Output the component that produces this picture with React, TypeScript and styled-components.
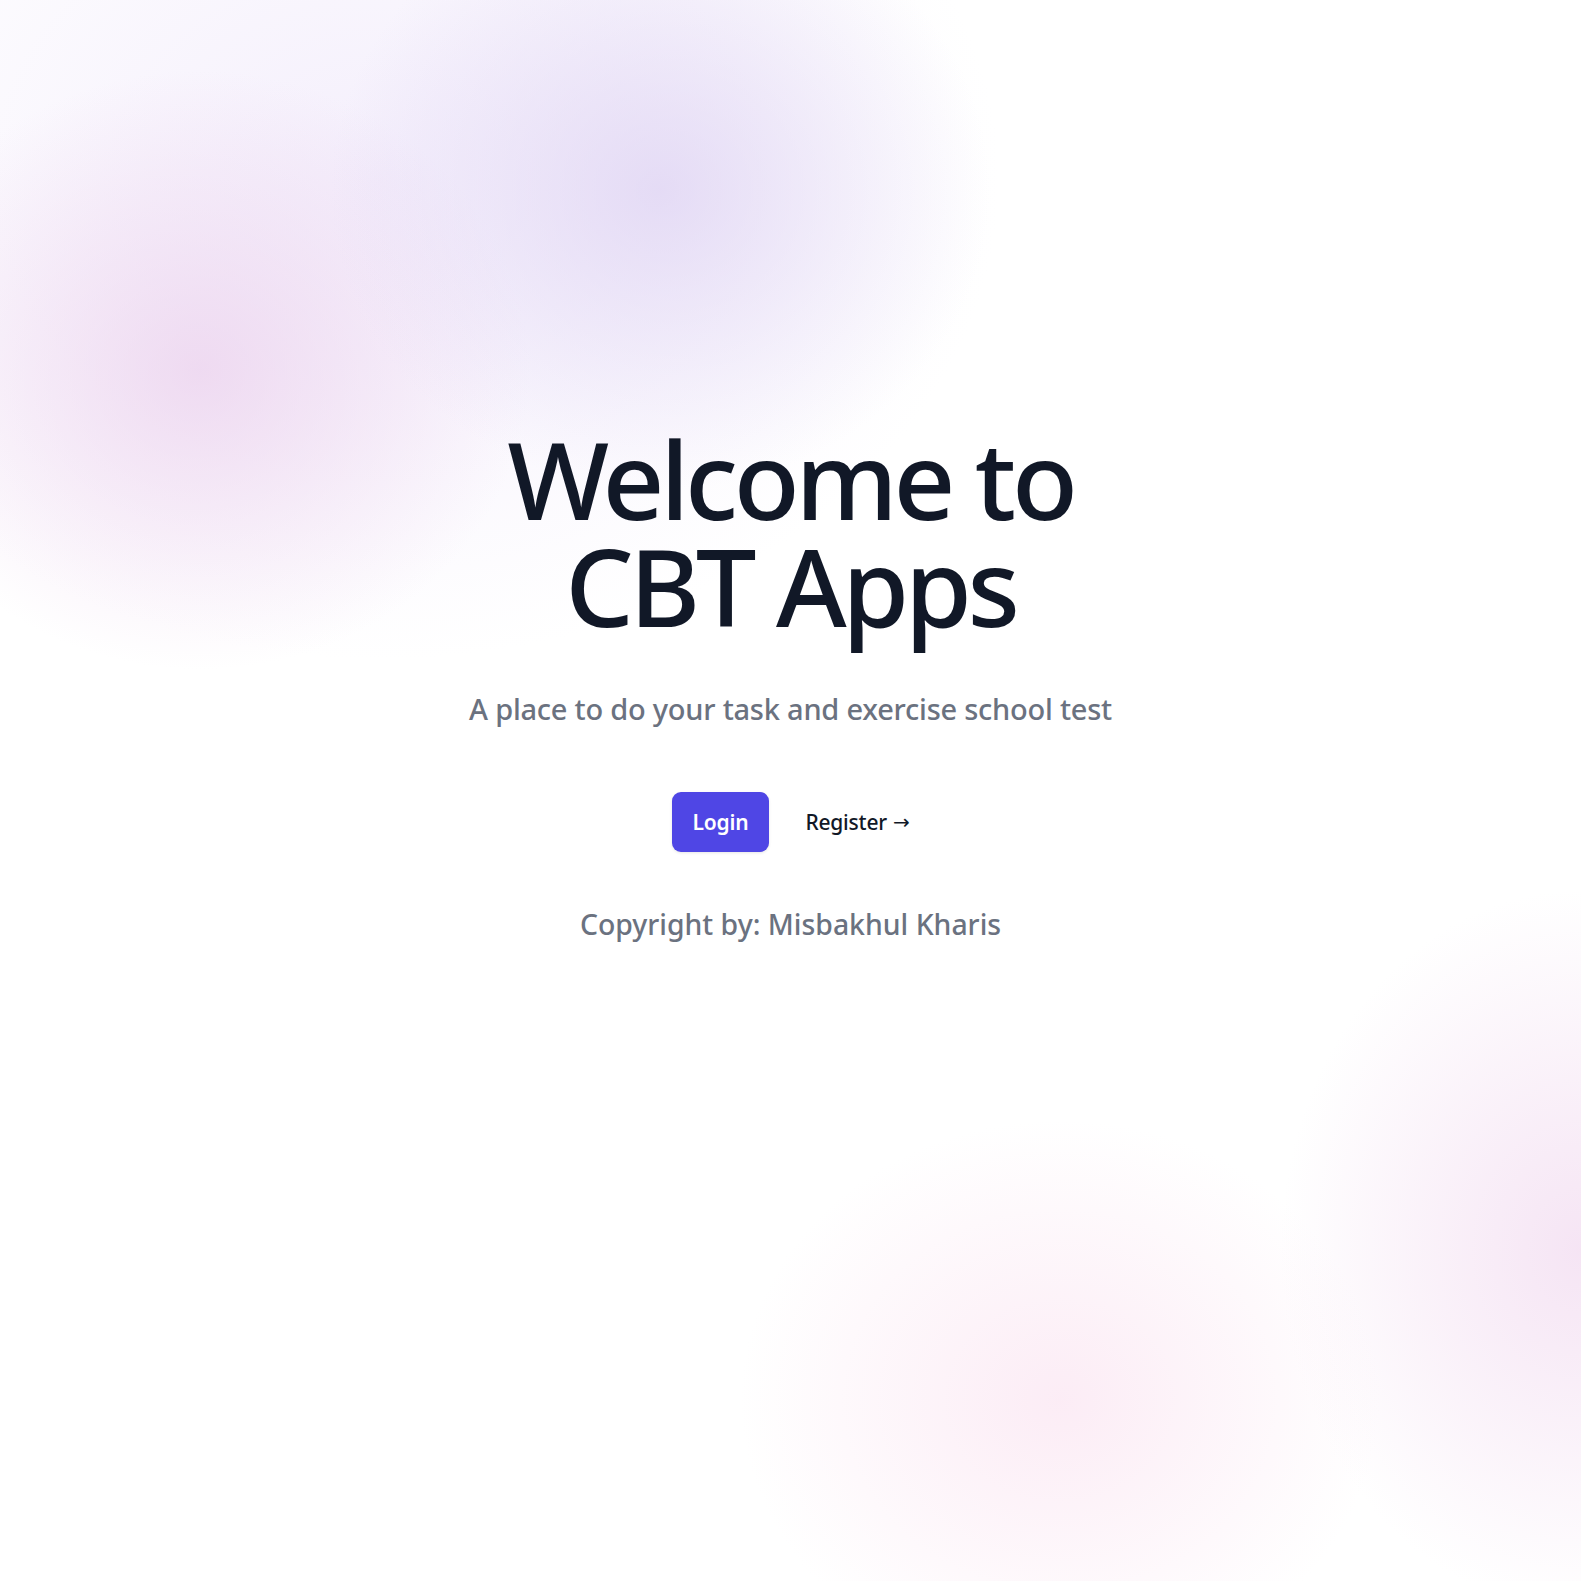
import React from "react";
import styled, { createGlobalStyle } from "styled-components";

const GlobalStyle = createGlobalStyle`
  html, body {
    margin: 0;
    padding: 0;
    background: #ffffff;
  }
  body {
    font-family: "Noto Sans", "Open Sans", Arial, sans-serif;
    -webkit-font-smoothing: antialiased;
  }
  * { box-sizing: border-box; }
`;

const Page = styled.div`
  position: relative;
  min-height: 1581px;
  overflow: hidden;
  background:
    radial-gradient(ellipse 330px 300px at 660px 190px, rgba(220, 208, 242, 0.7), rgba(220, 208, 242, 0) 100%),
    radial-gradient(ellipse 330px 300px at 200px 370px, rgba(234, 206, 236, 0.7), rgba(234, 206, 236, 0) 100%),
    radial-gradient(ellipse 620px 480px at 380px 180px, rgba(238, 230, 250, 0.65), rgba(238, 230, 250, 0) 100%),
    radial-gradient(ellipse 320px 280px at 1060px 1400px, rgba(250, 226, 240, 0.65), rgba(250, 226, 240, 0) 100%),
    radial-gradient(ellipse 300px 360px at 1580px 1250px, rgba(240, 214, 238, 0.65), rgba(240, 214, 238, 0) 100%),
    #ffffff;
`;

const Hero = styled.main`
  display: flex;
  flex-direction: column;
  align-items: center;
  text-align: center;
  padding-top: 425px;
`;

const Title = styled.h1`
  margin: 0;
  font-size: 108px;
  line-height: 107px;
  font-weight: 500;
  letter-spacing: -0.04em;
  color: #111827;
  max-width: 700px;
`;

const Subtitle = styled.p`
  margin: 46px 0 0;
  font-size: 29px;
  line-height: 48px;
  font-weight: 500;
  letter-spacing: -0.008em;
  color: #6b7280;
`;

const Actions = styled.div`
  display: flex;
  align-items: center;
  gap: 36px;
  margin-top: 59px;
`;

const LoginButton = styled.a`
  display: inline-flex;
  align-items: center;
  justify-content: center;
  height: 60px;
  padding: 0 21px;
  border-radius: 9px;
  background: #4f46e5;
  color: #ffffff;
  font-size: 21px;
  font-weight: 600;
  letter-spacing: -0.01em;
  text-decoration: none;
  box-shadow: 0 1px 3px rgba(0, 0, 0, 0.1);
`;

const RegisterLink = styled.a`
  display: inline-flex;
  align-items: center;
  gap: 6px;
  font-size: 21px;
  font-weight: 500;
  letter-spacing: -0.01em;
  color: #111827;
  text-decoration: none;
`;

const Arrow = styled.span`
  font-family: "DejaVu Sans", sans-serif;
  font-size: 20px;
  line-height: 1;
`;

const Copyright = styled.p`
  margin: 51px 0 0;
  font-size: 28.4px;
  line-height: 42px;
  font-weight: 500;
  color: #6b7280;
`;

export default function App() {
  return (
    <>
      <GlobalStyle />
      <Page>
        <Hero>
          <Title>Welcome to CBT Apps</Title>
          <Subtitle>A place to do your task and exercise school test</Subtitle>
          <Actions>
            <LoginButton href="#">Login</LoginButton>
            <RegisterLink href="#">
              Register <Arrow>→</Arrow>
            </RegisterLink>
          </Actions>
          <Copyright>Copyright by: Misbakhul Kharis</Copyright>
        </Hero>
      </Page>
    </>
  );
}
